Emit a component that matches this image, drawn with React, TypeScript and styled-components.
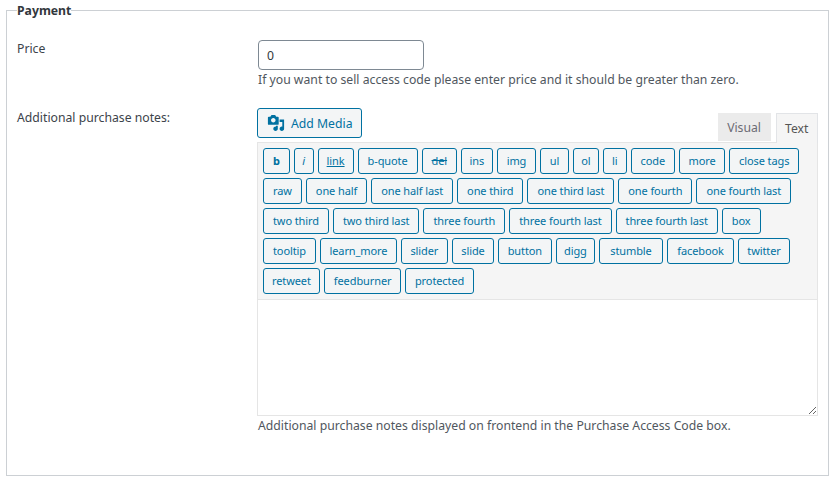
import React from 'react';
import styled, {createGlobalStyle} from 'styled-components';

const GlobalStyle = createGlobalStyle`
  html, body {
    margin: 0;
    padding: 0;
    background: #fff;
  }
  body {
    font-family: "Noto Sans", "Open Sans", sans-serif;
    font-size: 12.22px;
    color: #3c434a;
  }
`;

const toolbarRows = [
  ['b', 'i', 'link', 'b-quote', 'del', 'ins', 'img', 'ul', 'ol', 'li', 'code', 'more', 'close tags'],
  ['raw', 'one half', 'one half last', 'one third', 'one third last', 'one fourth', 'one fourth last'],
  ['two third', 'two third last', 'three fourth', 'three fourth last', 'three fourth last', 'box'],
  ['tooltip', 'learn_more', 'slider', 'slide', 'button', 'digg', 'stumble', 'facebook', 'twitter'],
  ['retweet', 'feedburner', 'protected'],
];

const tagPadding: Record<string, number> = {
  i: 7.5, link: 8, ins: 7.5, ul: 8.5, ol: 7.5, li: 8, more: 8.5,
  learn_more: 8.5, slider: 8.5, slide: 8.5, button: 8.5, digg: 7.5,
  stumble: 10, facebook: 9.5, twitter: 8, retweet: 8, protected: 8.5,
};

const App = () => (
  <>
    <GlobalStyle/>
    <Page>
      <Fieldset>
        <Legend>Payment</Legend>
        <PriceRow>
          <Label>Price</Label>
          <Field>
            <PriceInput type="text" defaultValue="0"/>
            <Description>If you want to sell access code please enter price and it should be greater than zero.</Description>
          </Field>
        </PriceRow>
        <NotesRow>
          <Label $offset={1}>Additional purchase notes:</Label>
          <Field>
            <EditorTop>
              <MediaButton>
                <MediaIcon viewBox="0 0 20 20">
                  <path d="M13 11V4c0-.55-.45-1-1-1h-1.67L9 1H5L3.67 3H2c-.55 0-1 .45-1 1v7c0 .55.45 1 1 1h10c.55 0 1-.45 1-1zM7 4.5c1.38 0 2.5 1.12 2.5 2.5S8.38 9.5 7 9.5 4.5 8.38 4.5 7 5.62 4.5 7 4.5zM14 6h5v10.5c0 1.38-1.12 2.5-2.5 2.5S14 17.88 14 16.5s1.12-2.5 2.5-2.5c.17 0 .34.02.5.05V9h-3V6zm-4 8.05V13h2v3.5c0 1.38-1.12 2.5-2.5 2.5S7 17.88 7 16.5 8.12 14 9.5 14c.17 0 .34.02.5.05z"/>
                </MediaIcon>
                Add Media
              </MediaButton>
              <Tabs>
                <Tab>Visual</Tab>
                <Tab $active>Text</Tab>
              </Tabs>
            </EditorTop>
            <Toolbar>
              {toolbarRows.map((row, i) => (
                <ToolbarRow key={i}>
                  {row.map((name, j) => (
                    <QuickTag key={j} $name={name}>{name}</QuickTag>
                  ))}
                </ToolbarRow>
              ))}
            </Toolbar>
            <Notes/>
            <Description>Additional purchase notes displayed on frontend in the Purchase Access Code box.</Description>
          </Field>
        </NotesRow>
      </Fieldset>
    </Page>
  </>
);

export default App;

const Page = styled.div`
  width: 835px;
  height: 481px;
  box-sizing: border-box;
  padding: 4px 6px 0;
`;

const Fieldset = styled.fieldset`
  box-sizing: border-box;
  height: 472px;
  margin: 0;
  padding: 0 10px;
  border: 1px solid #ccd0d4;
`;

const Legend = styled.legend`
  padding: 0;
  font-weight: 700;
  line-height: 13px;
  color: #32373c;
`;

const PriceRow = styled.div`
  display: flex;
  margin-top: 23px;
`;

const NotesRow = styled.div`
  display: flex;
  margin-top: 18px;
`;

const Label = styled.div<{$offset?: number}>`
  width: 240px;
  flex: none;
  line-height: 17px;
  margin-top: ${props => props.$offset ?? 0}px;
`;

const Field = styled.div`
  width: 561px;
`;

const PriceInput = styled.input`
  display: block;
  box-sizing: border-box;
  width: 166px;
  height: 30px;
  margin: 0 0 0 1px;
  padding: 0 8px;
  border: 1px solid #7e8993;
  border-radius: 4px;
  font: inherit;
  color: #32373c;
`;

const Description = styled.p`
  margin: 0;
  padding-left: 1px;
  line-height: 20px;
  white-space: nowrap;
  color: #50575e;
`;

const EditorTop = styled.div`
  display: flex;
  justify-content: space-between;
  align-items: flex-end;
  height: 34px;
`;

const MediaButton = styled.button`
  display: flex;
  align-items: center;
  align-self: flex-start;
  box-sizing: border-box;
  height: 30px;
  padding: 0 8px 0 9px;
  border: 1px solid #0071a1;
  border-radius: 3px;
  background: #f3f5f6;
  color: #0071a1;
  font: inherit;
`;

const MediaIcon = styled.svg`
  width: 18px;
  height: 18px;
  margin-right: 6px;
  fill: #0071a1;
`;

const Tabs = styled.div`
  display: flex;
  gap: 5px;
`;

const Tab = styled.div<{$active?: boolean}>`
  box-sizing: border-box;
  height: ${props => props.$active ? 30 : 28}px;
  padding: 0 8.5px;
  line-height: ${props => props.$active ? 30 : 28}px;
  border: 1px solid ${props => props.$active ? '#e2e4e7' : '#ebebeb'};
  border-bottom: 0;
  background: ${props => props.$active ? '#f5f5f5' : '#ebebeb'};
  color: ${props => props.$active ? '#555' : '#6b6b75'};
  margin-bottom: ${props => props.$active ? -1 : 0}px;
  position: relative;
`;

const Toolbar = styled.div`
  box-sizing: border-box;
  height: 157px;
  padding: 5px 5px 0;
  border: 1px solid #e5e5e5;
  border-bottom: 0;
  background: #f5f5f5;
`;

const ToolbarRow = styled.div`
  display: flex;
  gap: 4px;
  margin-bottom: 4px;
`;

const QuickTag = styled.div<{$name: string}>`
  box-sizing: border-box;
  height: 26px;
  padding: 0 ${props => tagPadding[props.$name] ?? 9}px;
  border: 1px solid #0071a1;
  border-radius: 3px;
  background: #f3f5f6;
  color: #0071a1;
  font-size: 11px;
  letter-spacing: -0.1px;
  line-height: 24px;
  white-space: nowrap;
  font-weight: ${props => props.$name === 'b' ? 700 : 400};
  font-style: ${props => props.$name === 'i' ? 'italic' : 'normal'};
  text-decoration: ${props => props.$name === 'link' ? 'underline' : props.$name === 'del' ? 'line-through' : 'none'};
`;

const Notes = styled.textarea`
  display: block;
  box-sizing: border-box;
  width: 100%;
  height: 117px;
  margin: 0;
  padding: 10px;
  border: 1px solid #e5e5e5;
  border-radius: 0;
  outline: none;
  background: #fff;
`;
